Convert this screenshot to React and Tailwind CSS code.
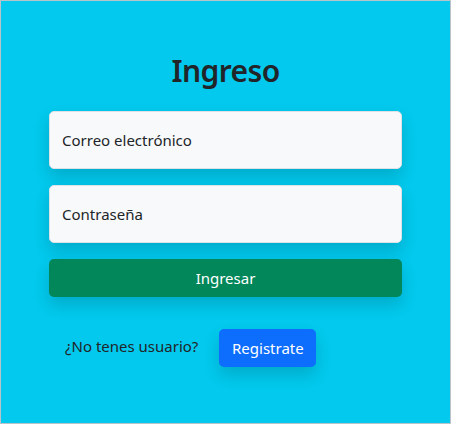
import { useState } from 'react';

export default function App() {
  const [email, setEmail] = useState('');
  const [password, setPassword] = useState('');

  return (
    <div
      className="w-[451px] h-[424px] bg-[#02c9ed] border border-[#b9c3c9] flex flex-col items-center"
      style={{ fontFamily: '"Noto Sans", "Open Sans", sans-serif' }}
    >
      {/* Title */}
      <h1 className="mt-[49px] text-[30px] leading-[42px] font-semibold tracking-[-0.6px] text-[#212529]">Ingreso</h1>

      <form className="mt-[19px] w-[353px] flex flex-col" onSubmit={e => e.preventDefault()}>
        <input
          value={email}
          onChange={e => setEmail(e.target.value)}
          placeholder="Correo electrónico"
          className="h-[58px] w-full px-3 bg-[#f8f9fa] border border-[#dee2e6] rounded-[5px] text-[15px] text-[#212529] placeholder:text-[#212529] shadow-[0_8px_16px_rgba(0,0,0,0.15)] focus:outline-none"
        />
        <input
          type="password"
          value={password}
          onChange={e => setPassword(e.target.value)}
          placeholder="Contraseña"
          className="mt-[16px] h-[58px] w-full px-3 bg-[#f8f9fa] border border-[#dee2e6] rounded-[5px] text-[15px] text-[#212529] placeholder:text-[#212529] shadow-[0_8px_16px_rgba(0,0,0,0.15)] focus:outline-none"
        />
        <button
          type="submit"
          className="mt-[16px] h-[38px] w-full bg-[#01875a] text-white text-[15px] rounded-[5px] shadow-[0_8px_16px_rgba(0,0,0,0.15)]"
        >
          Ingresar
        </button>
      </form>

      {/* Register */}
      <div className="mt-[32px] w-[353px] flex items-center">
        <span className="ml-[16px] text-[15px] text-[#212529] -mt-[3px]">¿No tenes usuario?</span>
        <button className="ml-[21px] h-[38px] w-[97px] bg-[#0d6efd] text-white text-[15px] rounded-[5px] shadow-[0_8px_16px_rgba(0,0,0,0.15)]">
          Registrate
        </button>
      </div>
    </div>
  );
}
